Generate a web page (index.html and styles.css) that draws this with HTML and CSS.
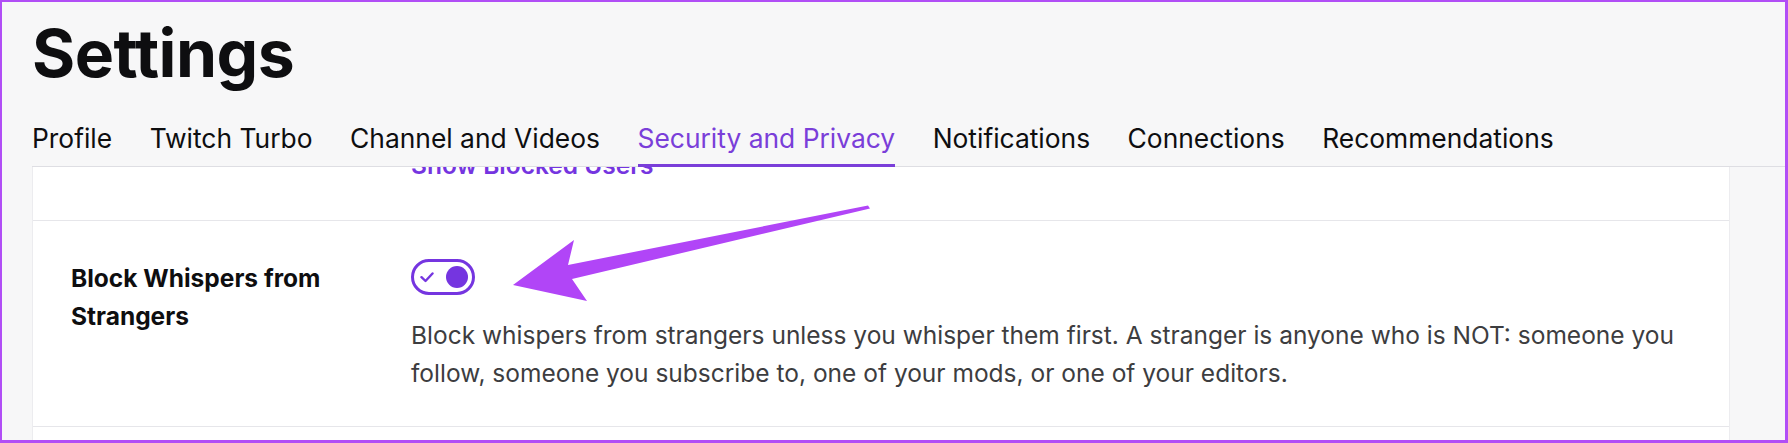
FILE: index.html
```html
<!DOCTYPE html>
<html lang="en">
<head>
  <meta charset="UTF-8">
  <meta name="viewport" content="width=device-width, initial-scale=1.0">
  <title>Settings</title>
  <link rel="stylesheet" href="styles.css">
</head>
<body>

<div class="frame">
  <header class="head">
    <h1 class="title">Settings</h1>
    <nav class="tabs">
      <a class="tab">Profile</a>
      <a class="tab">Twitch Turbo</a>
      <a class="tab">Channel and Videos</a>
      <a class="tab active">Security and Privacy</a>
      <a class="tab">Notifications</a>
      <a class="tab">Connections</a>
      <a class="tab">Recommendations</a>
    </nav>
  </header>

  <div class="content">
    <section class="card">
      <div class="row row-clipped">
        <div class="row-label"></div>
        <div class="row-control">
          <a class="link">Show Blocked Users</a>
        </div>
      </div>

      <div class="row">
        <div class="row-label">Block Whispers from Strangers</div>
        <div class="row-control">
          <span class="toggle">
            <svg class="toggle-check" width="14" height="11" viewBox="0 0 14 11">
              <path d="M1.5 5.2 L5.5 9 L12.5 1.5" fill="none" stroke="#7535e0" stroke-width="2.4" stroke-linecap="round" stroke-linejoin="round"/>
            </svg>
            <span class="toggle-knob"></span>
          </span>
          <p class="desc">Block whispers from strangers unless you whisper them first. A stranger is anyone who is NOT: someone you follow, someone you subscribe to, one of your mods, or one of your editors.</p>
        </div>
      </div>

      <div class="row"></div>
    </section>
    <div class="track"></div>
  </div>
</div>

<!-- annotation arrow drawn over the screenshot -->
<svg class="arrow" width="1788" height="443" viewBox="0 0 1788 443">
  <polygon points="513,285 574,240 568,265 868,205.5 870,208.5 572,279 587,301" fill="#b145f7"/>
</svg>

</body>
</html>
```

FILE: styles.css
```css
/* General Styles */
body {
  margin: 0;
  padding: 0;
  position: relative;
  font-family: 'Inter', 'Noto Sans', sans-serif;
  color: #0e0e10;
  background: #f7f7f8;
}

.frame {
  width: 1788px;
  height: 443px;
  box-sizing: border-box;
  border: 2px solid #b14ef6;
  border-right-width: 3px;
  border-bottom-width: 3px;
  background: #f7f7f8;
  display: flex;
  flex-direction: column;
  overflow: hidden;
}

/* Header */
.head {
  padding-left: 30px;
}

.title {
  margin: 10px 0 0;
  font-size: 66px;
  line-height: 82px;
  font-weight: 700;
  letter-spacing: -0.5px;
  color: #0e0e10;
}

.tabs {
  display: flex;
  align-items: flex-end;
  gap: 37.5px;
  margin-top: 28px;
  border-bottom: 1px solid #dedee3;
}

.tab {
  font-size: 26.4px;
  line-height: 32px;
  color: #0e0e10;
  padding-bottom: 10px;
  border-bottom: 3px solid transparent;
  margin-bottom: -1px;
}

.tab.active {
  color: #7a3ed9;
  border-bottom-color: #7a3ed9;
}

/* Content */
.content {
  flex: 1;
  display: flex;
  padding-left: 30px;
  min-height: 0;
}

.card {
  width: 1698px;
  box-sizing: border-box;
  background: #fff;
  border-left: 1px solid #ececef;
  border-right: 1px solid #ececef;
  overflow: hidden;
}

.track {
  flex: 1;
  background: #f7f7f8;
}

.row {
  display: flex;
  gap: 40px;
  padding: 38px 38px 34px;
  border-bottom: 1px solid #e6e6ea;
}

.row-clipped {
  margin-top: -21px;
  padding-top: 0;
  padding-bottom: 36px;
}

.row-label {
  width: 300px;
  flex-shrink: 0;
  font-size: 24.5px;
  line-height: 38px;
  font-weight: 700;
  color: #0e0e10;
}

.row-control {
  flex: 1;
  font-size: 24.5px;
  line-height: 38px;
}

.link {
  color: #7535e0;
  font-weight: 600;
}

/* Toggle */
.toggle {
  display: flex;
  align-items: center;
  justify-content: space-between;
  width: 64px;
  height: 36px;
  box-sizing: border-box;
  padding: 0 4px 0 6px;
  border: 3px solid #7535e0;
  border-radius: 18px;
}

.toggle-knob {
  width: 22px;
  height: 22px;
  border-radius: 50%;
  background: #7535e0;
}

.desc {
  margin: 21px 0 0;
  color: #3d3d40;
}

.arrow {
  position: absolute;
  top: 0;
  left: 0;
  pointer-events: none;
}
```
